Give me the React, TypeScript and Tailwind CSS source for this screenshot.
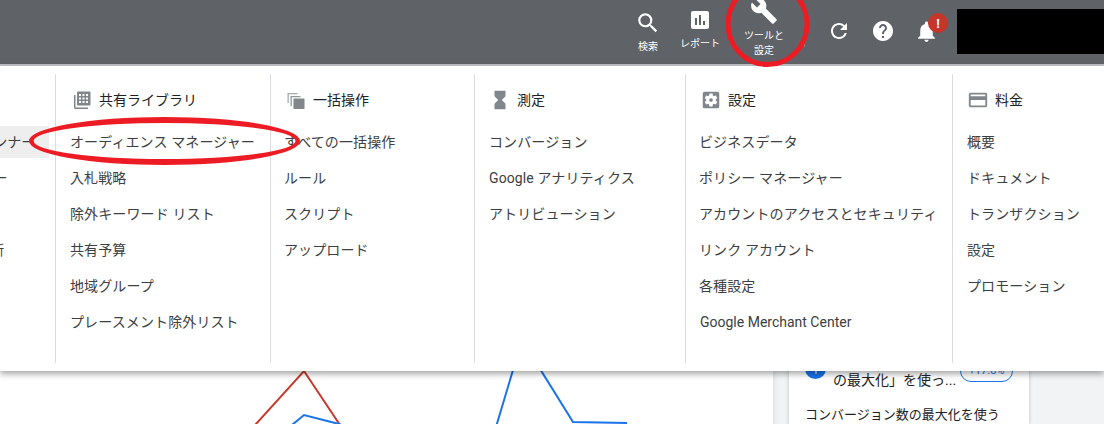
import React from "react";
import {
  MdSearch,
  MdAssessment,
  MdBuild,
  MdRefresh,
  MdHelp,
  MdNotifications,
  MdHourglassFull,
  MdSettingsApplications,
  MdCreditCard,
  MdArrowUpward,
} from "react-icons/md";

const fontStack = "font-['Roboto','Noto_Sans_CJK_JP',sans-serif]";

function LibraryIcon() {
  return (
    <svg width="20" height="20" viewBox="0 0 20 20" fill="#80868b">
      <path d="M2 5h1.500v12.500H16V19H3.500A1.500 1.500 0 0 1 2 17.500z" />
      <path
        fillRule="evenodd"
        d="M6 1.500h11.500A1 1 0 0 1 18.500 2.500v12a1 1 0 0 1-1 1H6a1 1 0 0 1-1-1v-12a1 1 0 0 1 1-1zM7 4v2h2V4zm3.500 0v2h2V4zM14 4v2h2V4zM7 7.500v2h2v-2zm3.500 0v2h2v-2zm3.500 0v2h2v-2zM7 11v2h2v-2zm3.500 0v2h2v-2zm3.500 0v2h2v-2z"
      />
    </svg>
  );
}

function BulkIcon() {
  return (
    <svg width="20" height="20" viewBox="0 0 20 20" fill="#80868b">
      <path d="M1.500 3h10v1.300H2.800V13H1.500z" opacity="0.7" />
      <path d="M4.500 6h10v1.300H5.800V16H4.500z" opacity="0.85" />
      <rect x="7.500" y="8.500" width="11" height="10.500" rx="0.500" />
    </svg>
  );
}

const columns = [
  {
    title: "共有ライブラリ",
    icon: <LibraryIcon />,
    width: "w-[215px]",
    pad: "pl-[15px]",
    itemPad: "-ml-px",
    items: ["オーディエンス マネージャー", "入札戦略", "除外キーワード リスト", "共有予算", "地域グループ", "プレースメント除外リスト"],
  },
  {
    title: "一括操作",
    icon: <BulkIcon />,
    width: "w-[204px]",
    pad: "pl-[14px]",
    itemPad: "-ml-px",
    items: ["すべての一括操作", "ルール", "スクリプト", "アップロード"],
  },
  {
    title: "測定",
    icon: <MdHourglassFull size={22} color="#80868b" />,
    width: "w-[211px]",
    pad: "pl-[14px]",
    itemPad: "",
    items: ["コンバージョン", "Google アナリティクス", "アトリビューション"],
  },
  {
    title: "設定",
    icon: <MdSettingsApplications size={22} color="#80868b" />,
    width: "w-[267px]",
    pad: "pl-[14px]",
    itemPad: "-ml-px",
    items: ["ビジネスデータ", "ポリシー マネージャー", "アカウントのアクセスとセキュリティ", "リンク アカウント", "各種設定", "Google Merchant Center"],
  },
  {
    title: "料金",
    icon: <MdCreditCard size={22} color="#80868b" />,
    width: "flex-1",
    pad: "pl-[14px]",
    itemPad: "",
    items: ["概要", "ドキュメント", "トランザクション", "設定", "プロモーション"],
  },
];

function Header() {
  return (
    <header className="flex h-[66px] shrink-0 items-start border-b-2 border-[#bdc1c6] bg-[#5f6368] pl-[622px] text-white">
      <div className="flex w-[52px] flex-col items-center pt-[11px]">
        <MdSearch size={26} className="-my-px" />
        <span className="mt-[5px] text-[10px] leading-[14px]">検索</span>
      </div>
      <div className="flex w-[52px] flex-col items-center pt-[8px]">
        <MdAssessment size={24} />
        <span className="mt-[5px] text-[10px] leading-[14px]">レポート</span>
      </div>
      <div className="flex w-[76px] flex-col items-center">
        <MdBuild size={28} className="-mt-[3px]" />
        <span className="mt-[3px] text-center text-[10px] leading-[15px]">
          ツールと
          <br />
          設定
        </span>
      </div>
      <div className="ml-[2px] mt-[40px] h-[7px] w-px bg-[#80868b]" />
      <div className="ml-[12px] flex h-[62px] w-[44px] items-center justify-center">
        <MdRefresh size={24} />
      </div>
      <div className="flex h-[62px] w-[44px] items-center justify-center">
        <MdHelp size={24} />
      </div>
      <div className="relative flex h-[62px] w-[43px] items-center justify-center">
        <MdNotifications size={25} />
        <span className="absolute left-[23px] top-[13px] flex size-[20px] items-center justify-center rounded-full bg-[#c5352a] text-[13px] font-bold leading-none">
          !
        </span>
      </div>
      <div className="ml-[9px] mt-[9px] h-[45px] w-[147px] bg-black" />
    </header>
  );
}

function PlanningColumn() {
  return (
    <div className="w-[56px] shrink-0 overflow-hidden border-r border-[#dadce0]">
      <div className="ml-[-136px] w-[185px] pt-[50px] text-[14px] text-[#3c4043]">
        <div className="my-[2px] flex h-[32px] items-center whitespace-nowrap bg-[#eeeeee]">パフォーマンス プランナー</div>
        <div className="flex h-[36px] items-center whitespace-nowrap">キーワード プランナー</div>
        <div className="flex h-[36px] items-center whitespace-nowrap">リーチ プランナー</div>
        <div className="flex h-[36px] items-center whitespace-nowrap">広告プレビューと診断</div>
      </div>
    </div>
  );
}

function ToolsMenu() {
  return (
    <nav className="absolute inset-x-0 top-[66px] z-10 flex h-[305px] bg-white py-[8px] shadow-[0_3px_6px_rgba(0,0,0,0.35)]">
      <PlanningColumn />
      {columns.map((col, i) => (
        <div
          key={col.title}
          className={`${col.width} ${col.pad} ${i < columns.length - 1 ? "border-r border-[#dadce0]" : ""} shrink-0`}
        >
          <div className="flex h-[50px] items-center gap-[6px] pt-[2px] text-[14px] text-[#202124]">
            <span className="flex w-[22px] items-center justify-center">{col.icon}</span>
            <span>{col.title}</span>
          </div>
          {col.items.map((item) => (
            <div
              key={item}
              className={`flex h-[36px] items-center whitespace-nowrap text-[14px] text-[#3c4043] ${
                item === "Google Merchant Center" ? "" : `tracking-[0.12px] ${col.itemPad}`
              }`}
            >
              {item}
            </div>
          ))}
        </div>
      ))}
    </nav>
  );
}

function Chart() {
  return (
    <div className="w-[773px] shrink-0 bg-white">
      <svg width="773" height="358" viewBox="0 66 773 358" fill="none" strokeWidth="2">
        <polyline points="246,435 304,371 350,440" stroke="#c5392b" />
        <polyline points="280,435 304,415 339,424 360,432" stroke="#1a73e8" />
        <polyline points="490,447 522,340 573,422 627,423" stroke="#1a73e8" />
      </svg>
    </div>
  );
}

function SidePanel() {
  return (
    <aside className="flex-1 bg-[#f1f3f4] pl-[16px] shadow-[inset_6px_0_6px_-6px_rgba(0,0,0,0.12)]">
      <div className="h-full w-[240px] bg-white px-[16px] pt-[287px] text-[13px] leading-[18px] text-[#202124] shadow-[0_1px_4px_rgba(0,0,0,0.2)]">
        <div className="flex items-start">
          <span className="mt-[5px] flex size-[21px] shrink-0 items-center justify-center rounded-full bg-[#1a73e8] text-white">
            <MdArrowUpward size={14} />
          </span>
          <p className="ml-[7px] w-[118px] whitespace-nowrap text-[14px]">
            「コンバージョン
            <br />
            の最大化」を使っ...
          </p>
          <span className="ml-auto mt-[7px] flex h-[22px] w-[53px] shrink-0 items-center justify-center rounded-full border border-[#1a73e8] text-[11px] text-[#1a73e8]">
            +17.8%
          </span>
        </div>
        <p className="mt-[17px] whitespace-nowrap">コンバージョン数の最大化を使う</p>
      </div>
    </aside>
  );
}

function Annotations() {
  return (
    <svg className="pointer-events-none absolute left-0 top-0 z-20" width="1104" height="424" fill="none">
      <path
        fill="#ed1c24"
        fillRule="evenodd"
        d="M29 141a135.500 24 0 1 0 271 0a135.500 24 0 1 0 -271 0zM33.500 141a131 18 0 1 0 262 0a131 18 0 1 0 -262 0z"
      />
      <ellipse cx="767.500" cy="24" rx="39.500" ry="40.500" stroke="#ed1c24" strokeWidth="5" />
    </svg>
  );
}

export default function App() {
  return (
    <div className={`relative flex h-[424px] w-[1104px] flex-col overflow-hidden bg-white ${fontStack}`}>
      <Header />
      <main className="flex flex-1 overflow-hidden">
        <Chart />
        <SidePanel />
      </main>
      <ToolsMenu />
      <Annotations />
    </div>
  );
}
